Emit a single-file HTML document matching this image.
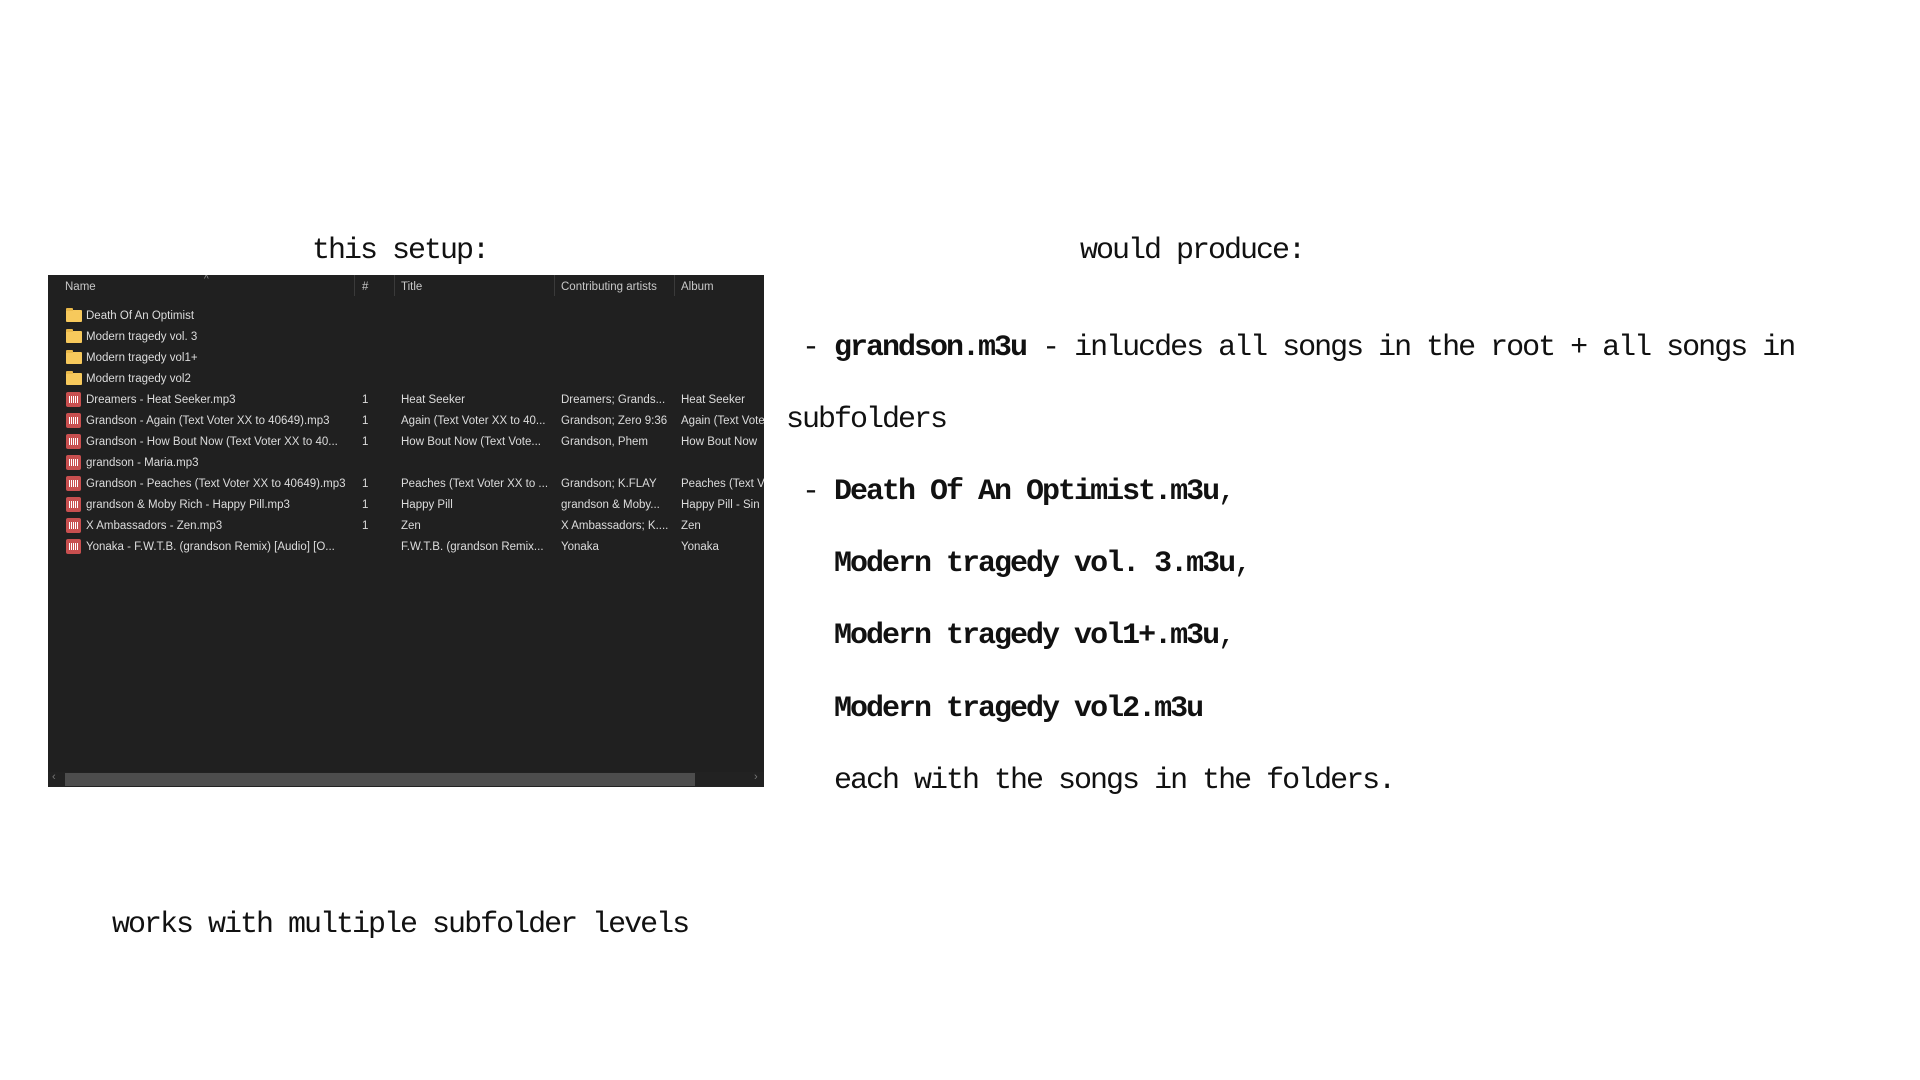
<!DOCTYPE html>
<html><head><meta charset="utf-8"><style>
body{margin:0;width:1920px;height:1080px;background:#fff;position:relative;overflow:hidden}
.m{position:absolute;font-family:"Liberation Mono",monospace;font-size:30px;letter-spacing:-2px;color:#111;white-space:pre;line-height:36px}
.m b{font-weight:bold}
#ex{position:absolute;left:48px;top:275px;width:716px;height:512px;background:#202020;font-family:"Liberation Sans",sans-serif;font-size:11.5px;color:#dcdcdc;overflow:hidden}
.h{position:absolute;top:5px;color:#c8c8c8;line-height:14px}
.sep{position:absolute;top:0;width:1px;height:21px;background:#3a3a3a}
.r{position:absolute;left:0;width:716px;height:16px;line-height:16px;white-space:nowrap}
.r span{position:absolute;top:0}
.fo{position:absolute;left:18px;top:2px;width:16px;height:12px;background:#f7c95c;border-radius:1px}
.fo:before{content:"";position:absolute;left:0;top:-2px;width:7px;height:3px;background:#e9b84a;border-radius:1px 1px 0 0}
.au{position:absolute;left:18px;top:0;width:15px;height:15px;background:#c84f4f;border-radius:2px}
.au:after{content:"";position:absolute;left:3px;top:4px;width:9px;height:7px;background:repeating-linear-gradient(90deg,#fff 0 1px,transparent 1px 2px)}
</style></head><body>
<div class="m" style="left:312px;top:233px">this setup:</div>
<div class="m" style="left:1080px;top:233px">would produce:</div>
<div class="m" style="left:786px;top:330px"> - <b>grandson.m3u</b> - inlucdes all songs in the root + all songs in</div>
<div class="m" style="left:786px;top:402px">subfolders</div>
<div class="m" style="left:786px;top:474px"> - <b>Death Of An Optimist.m3u</b>,</div>
<div class="m" style="left:786px;top:546px">   <b>Modern tragedy vol. 3.m3u</b>,</div>
<div class="m" style="left:786px;top:618px">   <b>Modern tragedy vol1+.m3u</b>,</div>
<div class="m" style="left:786px;top:691px">   <b>Modern tragedy vol2.m3u</b></div>
<div class="m" style="left:786px;top:763px">   each with the songs in the folders.</div>
<div class="m" style="left:112px;top:907px">works with multiple subfolder levels</div>

<div id="ex">
<div class="h" style="left:17px">Name</div>
<div style="position:absolute;left:156px;top:-1px;color:#999;font-size:10px">^</div>
<div class="sep" style="left:306px"></div>
<div class="h" style="left:314px">#</div>
<div class="sep" style="left:346px"></div>
<div class="h" style="left:353px">Title</div>
<div class="sep" style="left:506px"></div>
<div class="h" style="left:513px">Contributing artists</div>
<div class="sep" style="left:626px"></div>
<div class="h" style="left:633px">Album</div>

<div class="r" style="top:33px"><i class="fo"></i><span style="left:38px">Death Of An Optimist</span></div>
<div class="r" style="top:54px"><i class="fo"></i><span style="left:38px">Modern tragedy vol. 3</span></div>
<div class="r" style="top:75px"><i class="fo"></i><span style="left:38px">Modern tragedy vol1+</span></div>
<div class="r" style="top:96px"><i class="fo"></i><span style="left:38px">Modern tragedy vol2</span></div>
<div class="r" style="top:117px"><i class="au"></i><span style="left:38px">Dreamers - Heat Seeker.mp3</span><span style="left:314px">1</span><span style="left:353px">Heat Seeker</span><span style="left:513px">Dreamers; Grands...</span><span style="left:633px">Heat Seeker</span></div>
<div class="r" style="top:138px"><i class="au"></i><span style="left:38px">Grandson - Again (Text Voter XX to 40649).mp3</span><span style="left:314px">1</span><span style="left:353px">Again (Text Voter XX to 40...</span><span style="left:513px">Grandson; Zero 9:36</span><span style="left:633px">Again (Text Vote</span></div>
<div class="r" style="top:159px"><i class="au"></i><span style="left:38px">Grandson - How Bout Now (Text Voter XX to 40...</span><span style="left:314px">1</span><span style="left:353px">How Bout Now (Text Vote...</span><span style="left:513px">Grandson, Phem</span><span style="left:633px">How Bout Now</span></div>
<div class="r" style="top:180px"><i class="au"></i><span style="left:38px">grandson - Maria.mp3</span></div>
<div class="r" style="top:201px"><i class="au"></i><span style="left:38px">Grandson - Peaches (Text Voter XX to 40649).mp3</span><span style="left:314px">1</span><span style="left:353px">Peaches (Text Voter XX to ...</span><span style="left:513px">Grandson; K.FLAY</span><span style="left:633px">Peaches (Text V</span></div>
<div class="r" style="top:222px"><i class="au"></i><span style="left:38px">grandson &amp; Moby Rich - Happy Pill.mp3</span><span style="left:314px">1</span><span style="left:353px">Happy Pill</span><span style="left:513px">grandson &amp; Moby...</span><span style="left:633px">Happy Pill - Sin</span></div>
<div class="r" style="top:243px"><i class="au"></i><span style="left:38px">X Ambassadors - Zen.mp3</span><span style="left:314px">1</span><span style="left:353px">Zen</span><span style="left:513px">X Ambassadors; K....</span><span style="left:633px">Zen</span></div>
<div class="r" style="top:264px"><i class="au"></i><span style="left:38px">Yonaka - F.W.T.B. (grandson Remix) [Audio] [O...</span><span style="left:353px">F.W.T.B. (grandson Remix...</span><span style="left:513px">Yonaka</span><span style="left:633px">Yonaka</span></div>

<div style="position:absolute;left:0;top:497px;width:716px;height:15px;background:#222"></div>
<div style="position:absolute;left:17px;top:498px;width:630px;height:13px;background:#4d4d4d"></div>
<div style="position:absolute;left:4px;top:496px;color:#777;font-size:11px">‹</div>
<div style="position:absolute;left:706px;top:496px;color:#777;font-size:11px">›</div>
</div>
</body></html>
